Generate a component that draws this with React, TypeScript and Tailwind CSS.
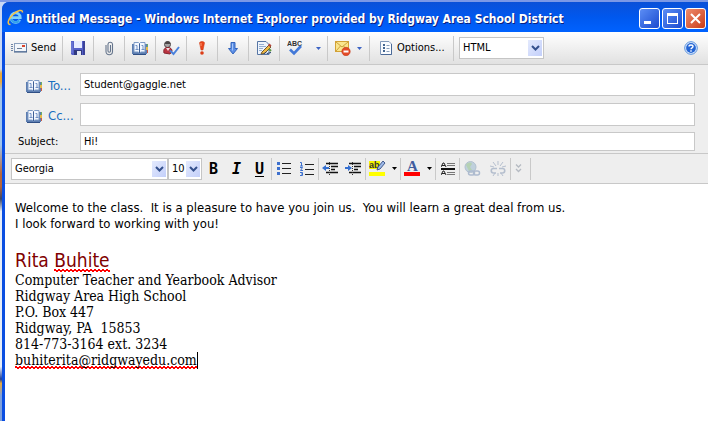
import { ReactNode } from 'react'

interface ToolButtonProps {
  label: string
  className?: string
  children: ReactNode
}

const formatButton = 'flex h-6 w-[23px] shrink-0 items-center justify-center'
const formatLetter = "font-['DejaVu_Sans_Mono',monospace] text-[15px] leading-4 font-bold text-black"

function Divider({ className = 'h-[25px]' }: { className?: string }) {
  return <span className={`w-px shrink-0 bg-[#c9c9c9] ${className}`} />
}

function ToolButton({ label, className = 'w-[30px]', children }: ToolButtonProps) {
  return (
    <button aria-label={label} className={`flex h-6 shrink-0 items-center justify-center ${className}`}>
      {children}
    </button>
  )
}

function Caret({ className = 'text-[#3c63c4]' }: { className?: string }) {
  return (
    <svg width="5" height="3" viewBox="0 0 5 3" className={`shrink-0 ${className}`}>
      <path d="M0 0h5L2.500 3z" fill="currentColor" />
    </svg>
  )
}

interface DropdownProps {
  label: string
  value: string
  className: string
}

function Dropdown({ label, value, className }: DropdownProps) {
  return (
    <span className={`relative flex h-[22px] shrink-0 border border-[#c5c5c5] bg-white ${className}`}>
      <select
        aria-label={label}
        className="w-full appearance-none bg-transparent pl-[3px] text-[11px] leading-5 text-black outline-none"
      >
        <option>{value}</option>
      </select>
      <span className="pointer-events-none absolute top-[2px] right-px flex h-4 w-[14px] items-center justify-center bg-linear-to-br from-[#e4eafd] to-[#c3cffa]">
        <svg width="9" height="6" viewBox="0 0 9 6" fill="none">
          <path d="M1 1l3.500 3.500L8 1" stroke="#34508c" strokeWidth="2" />
        </svg>
      </span>
    </span>
  )
}

function ExplorerIcon() {
  return (
    <svg width="17" height="17" viewBox="0 0 17 17" fill="none" className="shrink-0">
      <path d="M12.800 10.800A4.800 4.800 0 1 1 13.300 8.600H5" stroke="#7fd0fa" strokeWidth="2.600" />
      <path d="M12.300 11.500A4.800 4.800 0 0 1 4 10" stroke="#35a3ec" strokeWidth="2" />
      <path d="M3.500 15.500C-.5 15.500 1 10 6 5.500S15.500 0 15.500 3.500" stroke="#f7c243" strokeWidth="1.500" />
    </svg>
  )
}

function SendIcon() {
  return (
    <svg width="16" height="10" viewBox="0 0 16 10" className="shrink-0">
      <path d="M0 1.500h2M0 3.500h2M0 5.500h2M0 7.500h2" stroke="#6f86a8" />
      <rect x="3.500" y=".5" width="12" height="8" fill="#f3f6fa" stroke="#8ba0bd" />
      <path d="M3 9h13V1" stroke="#3d5a85" fill="none" />
      <rect x="11" y="2" width="3" height="2" fill="#d8452c" />
      <path d="M6 5.500h5" stroke="#6d7f98" />
    </svg>
  )
}

function SaveIcon() {
  return (
    <svg width="14" height="14" viewBox="0 0 14 14">
      <path d="M0 0h14v14H1L0 13z" fill="#5560c8" />
      <path d="M12 0h2v14h-2z" fill="#3b4299" />
      <rect x="3" y="0" width="8" height="7" fill="#e6ebff" />
      <rect x="3" y="9" width="8" height="5" fill="#303a80" />
      <rect x="6" y="10" width="4" height="4" fill="#e4e9f5" />
      <path d="M1 1v11" stroke="#7984dc" />
    </svg>
  )
}

function ClipIcon() {
  return (
    <svg width="9" height="15" viewBox="0 0 9 15" fill="none">
      <path
        d="M1 4v6.500a3.200 3.200 0 0 0 6.500 0V3A2.300 2.300 0 0 0 3 3v7a1.200 1.200 0 0 0 2.500 0V4"
        stroke="#65758c"
        strokeWidth="1.100"
      />
    </svg>
  )
}

function BookIcon() {
  return (
    <svg width="16" height="13" viewBox="0 0 16 13" className="shrink-0">
      <path d="M0 2h15v10H0z" fill="#5c7db0" />
      <path d="M2 .5h4.500l1 1 1-1H13V10H9l-1.500 1L6 10H2z" fill="#f2f7ff" stroke="#7f9cc6" />
      <path d="M7.500 1.500V11" stroke="#3d5f96" />
      <path d="M3.500 3.500H5v4M3.500 7.500h3M9.500 3.500H11v4M9.500 7.500h3" stroke="#7191c4" fill="none" />
      <path d="M1 12.500h13" stroke="#2f4f85" />
      <path d="M15 2h1v3h-1z" fill="#6bae5f" />
      <path d="M14 5h2v3h-2z" fill="#e8b94a" />
      <path d="M15 8h1v3h-1z" fill="#c95a47" />
    </svg>
  )
}

function CheckNamesIcon() {
  return (
    <svg width="17" height="15" viewBox="0 0 17 15" fill="none">
      <circle cx="4.500" cy="3.500" r="3" fill="#a7a4a4" stroke="#504b4d" />
      <path d="M2 3C2 0 7-1 7.500 3z" fill="#4b4546" />
      <path d="M1 12c-1-4 1-5.500 4-5.500s4 2 4 3.500l-2 3z" fill="#bb3440" stroke="#842630" />
      <path d="M3 7l2 3 2-3" fill="#f3dedf" />
      <path d="M7 9.500l3.500 3.500L16 6" stroke="#4b82dc" strokeWidth="2" />
    </svg>
  )
}

function ImportanceHighIcon() {
  return (
    <svg width="6" height="14" viewBox="0 0 6 14">
      <path d="M.5 2C.5 0 5.500 0 5.500 2L4 9H2z" fill="#e8451c" stroke="#c93814" strokeWidth=".5" />
      <circle cx="3" cy="12" r="1.800" fill="#dc3d17" />
      <path d="M2 2v3" stroke="#fb9c73" />
    </svg>
  )
}

function ImportanceLowIcon() {
  return (
    <svg width="10" height="13" viewBox="0 0 10 13">
      <path d="M3 .5h4v6h2.500L5 12 .5 6.500H3z" fill="#5b8ee6" stroke="#3566bd" />
      <path d="M4.500 1.500v7" stroke="#a6c7fa" />
    </svg>
  )
}

function SignatureIcon() {
  return (
    <svg width="15" height="14" viewBox="0 0 15 14">
      <path d="M.5.5H9l3 3v10H.5z" fill="#eef4fc" stroke="#5676a5" />
      <path d="M2 3.500h5M2 5.500h7M2 7.500h4M2 9.500h3" stroke="#94aed1" />
      <path d="M5 11l7-7 2 2-6.500 6.500L4 13z" fill="#edb944" stroke="#70572b" />
      <path d="M11 4l1.500-1.500 2 2L13 6z" fill="#b5443b" />
      <path d="M7 12.500l2-1 1 1 4-1" stroke="#243e6d" fill="none" />
      <path d="M12 8l2 2" stroke="#5d9848" strokeWidth="2" />
    </svg>
  )
}

function BlockMailIcon() {
  return (
    <svg width="16" height="15" viewBox="0 0 16 15" fill="none">
      <rect x=".5" y=".5" width="13" height="10" fill="#fae58d" stroke="#d3a236" />
      <path d="M1 1l6 5 6-5M1 10l4.500-5M13 10L8.500 5" stroke="#cca13d" />
      <circle cx="11" cy="10.500" r="4.200" fill="#e34b27" stroke="#c43a1b" strokeWidth=".6" />
      <path d="M8.500 10.500h5" stroke="#fff" strokeWidth="2" />
    </svg>
  )
}

function OptionsIcon() {
  return (
    <svg width="12" height="14" viewBox="0 0 12 14" className="shrink-0">
      <path d="M.5.5H9l2.500 2.500v10.500H.5z" fill="#fafcff" stroke="#8299ba" />
      <path d="M1 13.500h10.500V3" stroke="#4b6a98" fill="none" />
      <path d="M3 3h2v2H3zM3 6h2v2H3zM3 9h2v2H3z" fill="#43658f" />
      <path d="M6.500 4.500h3M6.500 7.500h3M6.500 10.500h3" stroke="#8aa0bd" />
    </svg>
  )
}

function MessageToolbar() {
  return (
    <div className="flex h-[33px] items-center border-b border-[#c8c8c8] bg-linear-to-b from-white to-[#e1e1e1]">
      <button className="flex w-[57px] shrink-0 items-center gap-1 pl-[6px] text-[11px] leading-4">
        <SendIcon />
        Send
      </button>
      <Divider />
      <ToolButton label="Save"><SaveIcon /></ToolButton>
      <Divider />
      <ToolButton label="Attach file"><ClipIcon /></ToolButton>
      <Divider />
      <ToolButton label="Address book"><BookIcon /></ToolButton>
      <Divider />
      <ToolButton label="Check names"><CheckNamesIcon /></ToolButton>
      <Divider />
      <ToolButton label="High importance"><ImportanceHighIcon /></ToolButton>
      <Divider />
      <ToolButton label="Low importance"><ImportanceLowIcon /></ToolButton>
      <Divider />
      <ToolButton label="Insert signature"><SignatureIcon /></ToolButton>
      <Divider />
      <ToolButton label="Spelling" className="w-[47px] gap-3">
        <svg width="17" height="16" viewBox="0 0 17 16" fill="none">
          <text x="0" y="6" fontSize="7" fontWeight="bold" fill="#333" fontFamily="Liberation Sans, sans-serif">
            ABC
          </text>
          <path d="M3 9.500l4 4L14 6" stroke="#4379d8" strokeWidth="2.600" />
        </svg>
        <Caret />
      </ToolButton>
      <Divider />
      <ToolButton label="Block sender" className="w-[41px] gap-[6px]">
        <BlockMailIcon />
        <Caret />
      </ToolButton>
      <Divider />
      <button className="flex w-[83px] shrink-0 items-center gap-[5px] pl-[10px] text-[11px] leading-4">
        <OptionsIcon />
        Options...
      </button>
      <Divider />
      <Dropdown label="Message format" value="HTML" className="ml-[5px] w-[85px]" />
      <button aria-label="Help" className="mr-[10px] ml-auto shrink-0">
        <svg width="14" height="14" viewBox="0 0 14 14">
          <circle cx="7" cy="7" r="6.300" fill="#e4effe" stroke="#5790dc" />
          <circle cx="7" cy="7" r="4.900" fill="#2465d4" />
          <path d="M5 5.500C5 3.400 9 3.400 9 5.500 9 7 7 6.800 7 8.300" stroke="#fff" strokeWidth="1.400" fill="none" />
          <path d="M6.300 9.300h1.400v1.400H6.300z" fill="#fff" />
        </svg>
      </button>
    </div>
  )
}

function Recipient({ label, id, value }: { label: string; id: string; value: string }) {
  return (
    <div className="flex items-center">
      <button className="flex w-[75px] shrink-0 items-center gap-[6px] pt-[3px] pl-[21px] text-[13px] leading-4 text-[#1a6fbf]">
        <BookIcon />
        <span id={`${id}-label`}>{label}</span>
      </button>
      <input
        id={id}
        aria-labelledby={`${id}-label`}
        defaultValue={value}
        className="h-[23px] min-w-0 flex-1 border border-[#c8c8c8] bg-white px-[3px] text-[11px] outline-none"
      />
    </div>
  )
}

function MessageHeader() {
  return (
    <div className="flex flex-col pt-2 pr-[13px] pb-[2px]">
      <Recipient id="to" label="To..." value="Student@gaggle.net" />
      <div className="mt-[7px]">
        <Recipient id="cc" label="Cc..." value="" />
      </div>
      <div className="mt-[6px] flex items-center">
        <label htmlFor="subject" className="w-[75px] shrink-0 pt-[2px] pl-[13px] text-[11px]">
          Subject:
        </label>
        <input
          id="subject"
          defaultValue="Hi!"
          className="h-[19px] min-w-0 flex-1 border border-[#c8c8c8] bg-white px-[3px] text-[11px] outline-none"
        />
      </div>
    </div>
  )
}

function IndentIcon({ outdent = false }: { outdent?: boolean }) {
  return (
    <svg width="17" height="14" viewBox="0 0 17 14" fill="none">
      <path d="M4 1.500h12M9 4.500h7M9 7.500h4M4 10.500h12" stroke="#111" strokeWidth="1.500" />
      <path d="M7.500 0v14" stroke="#333" strokeDasharray="1 1" />
      <path d={outdent ? 'M4 3L0 6l4 3V7h3V5H4z' : 'M3 3l4 3-4 3V7H0V5h3z'} fill="#356fd0" />
    </svg>
  )
}

function FormatToolbar() {
  return (
    <div className="flex h-[31px] items-center border-y border-[#c8c8c8] bg-[#eee] pl-[6px]">
      <Dropdown label="Font" value="Georgia" className="w-[157px]" />
      <Dropdown label="Font size" value="10" className="w-[34px]" />
      <button className={`${formatButton} ${formatLetter}`}>B</button>
      <button className={`${formatButton} ${formatLetter} italic`}>I</button>
      <button className={`${formatButton} ${formatLetter} underline underline-offset-2`}>U</button>
      <Divider className="h-[22px]" />
      <button aria-label="Bulleted list" className={formatButton}>
        <svg width="14" height="13" viewBox="0 0 14 13">
          <path d="M0 0h3v3H0zM0 5h3v3H0zM0 10h3v3H0z" fill="#3d70ce" />
          <path d="M5 1.500h9M5 6.500h9M5 11.500h9" stroke="#222" />
        </svg>
      </button>
      <button aria-label="Numbered list" className={formatButton}>
        <svg width="14" height="14" viewBox="0 0 14 14" fill="none">
          <path d="M0 .5h1.500V4M0 4h3M0 5.500h2.500L.5 8.500H3M0 10.500h2.500v3H0M1 12h1.500" stroke="#3d70ce" />
          <path d="M5 2.500h9M5 7.500h9M5 12.500h9" stroke="#222" />
        </svg>
      </button>
      <Divider className="h-[22px]" />
      <button aria-label="Decrease indent" className={formatButton}><IndentIcon outdent /></button>
      <button aria-label="Increase indent" className={formatButton}><IndentIcon /></button>
      <Divider className="h-[22px]" />
      <button aria-label="Highlight colour" className="flex w-[34px] shrink-0 items-center justify-center gap-[6px]">
        <svg width="17" height="17" viewBox="0 0 17 17">
          <path d="M0 1h11v8H0z" fill="#f5f500" />
          <text x="0" y="8" fontSize="9" fontWeight="bold" fill="#333" fontFamily="Liberation Sans, sans-serif">
            ab
          </text>
          <path d="M14 1l2 2-5 6-3 1 1-3z" fill="#9db9e8" stroke="#425a8c" />
          <path d="M0 12h16v4H0z" fill="#ff0" />
        </svg>
        <Caret className="text-black" />
      </button>
      <Divider className="h-[22px]" />
      <button aria-label="Font colour" className="flex w-[34px] shrink-0 items-center justify-center gap-[6px]">
        <svg width="17" height="17" viewBox="0 0 17 17" className="overflow-visible">
          <text x="3" y="11" fontSize="15" fontWeight="bold" fill="#405d9f" fontFamily="Liberation Serif, serif">
            A
          </text>
          <path d="M0 12h16v4H0z" fill="#f00" />
        </svg>
        <Caret className="text-black" />
      </button>
      <Divider className="h-[22px]" />
      <button aria-label="Horizontal line" className={formatButton}>
        <svg width="14" height="14" viewBox="0 0 14 14" fill="none">
          <path d="M0 5l2-4h1l2 4M1 3.500h3M0 13l2-4h1l2 4M1 11.500h3" stroke="#222" />
          <path d="M6 1.500h8M6 3.500h8M6 10.500h8M6 12.500h8" stroke="#777" />
          <path d="M0 7h14" stroke="#111" strokeWidth="2" />
        </svg>
      </button>
      <Divider className="h-[22px]" />
      <button aria-label="Insert link" disabled className="flex w-[25px] shrink-0 justify-center">
        <svg width="17" height="16" viewBox="0 0 17 16" fill="none">
          <circle cx="6.500" cy="6" r="5.500" fill="#bfd0dc" stroke="#b3c1cf" />
          <path d="M2 4c2-3 5-3 6-1L6 6l2 3-3 1z" fill="#b5d1b4" />
          <rect x="4.500" y="10" width="6" height="4" rx="2" stroke="#aebbcf" strokeWidth="1.500" />
          <rect x="9.500" y="10" width="6" height="4" rx="2" stroke="#aebbcf" strokeWidth="1.500" />
        </svg>
      </button>
      <button aria-label="Remove link" disabled className="flex w-[25px] shrink-0 justify-center">
        <svg width="16" height="16" viewBox="0 0 16 16" fill="none" stroke="#b5bfce">
          <path d="M7 7.500H3.500a2 2 0 0 0 0 4.500H6M9 7.500h3.500a2 2 0 0 1 0 4.500H10" strokeWidth="1.600" />
          <path d="M8 0v4M3 1l3 4M13 1l-3 4M8 12v3M5 12l-2 3M11 12l2 3M0 5l4 1M16 5l-4 1" />
        </svg>
      </button>
      <Divider className="h-[22px]" />
      <button aria-label="More" disabled className="flex w-[19px] shrink-0 justify-center pr-1">
        <svg width="7" height="9" viewBox="0 0 7 9" fill="none" stroke="#b5bac2">
          <path d="M1 .5l2.500 2.500L6 .5M1 5l2.500 2.500L6 5" strokeWidth="1.300" />
        </svg>
      </button>
      <Divider className="h-[22px]" />
    </div>
  )
}

// red zigzag under words the spell checker does not know
const misspelled =
  'pb-px bg-[linear-gradient(45deg,transparent_35%,#f00_35%_65%,transparent_65%),linear-gradient(135deg,transparent_35%,#f00_35%_65%,transparent_65%)] bg-[length:4px_3px,4px_3px] bg-[position:0_100%,2px_100%] bg-repeat-x'

function MessageBody() {
  return (
    <div className="flex-1 bg-white px-[10px] pt-4 text-[13px] leading-4 text-black">
      <p className="whitespace-pre-wrap">Welcome to the class.  It is a pleasure to have you join us.  You will learn a great deal from us.</p>
      <p>I look forward to working with you!</p>
      <p className="mt-4 text-[19px] leading-6 text-[#800000]">
        Rita <span className={misspelled}>Buhite</span>
      </p>
      <address className="font-['DejaVu_Serif_Condensed','DejaVu_Serif',serif] text-[14px] leading-4 whitespace-pre-wrap not-italic">
        <p>Computer Teacher and Yearbook Advisor</p>
        <p>Ridgway Area High School</p>
        <p>P.O. Box 447</p>
        <p>Ridgway, PA  15853</p>
        <p>814-773-3164 ext. 3234</p>
        <p>
          <span className={`border-r border-black ${misspelled}`}>buhiterita@ridgwayedu.com</span>
        </p>
      </address>
    </div>
  )
}

const captionButton = 'flex h-[21px] w-[21px] items-center justify-center rounded-[3px] border border-white'

function TitleBar() {
  return (
    <header className="flex h-[30px] shrink-0 items-center rounded-tl-[7px] bg-linear-to-b from-[#0a50d8] via-[#0058ee] to-[#0062ff] pr-[2px] pl-[5px]">
      <ExplorerIcon />
      <h1 className="ml-[2px] truncate pt-1 text-[12px] font-bold text-white [text-shadow:1px_1px_0_#0a1f80]">
        Untitled Message - Windows Internet Explorer provided by Ridgway Area School District
      </h1>
      <div className="ml-auto flex shrink-0 gap-[2px] pt-[3px]">
        <button aria-label="Minimize" className={`${captionButton} bg-linear-to-br from-[#5c8df5] to-[#1c49cf]`}>
          <span className="mt-2 mr-1 h-[3px] w-[7px] bg-white" />
        </button>
        <button aria-label="Maximize" className={`${captionButton} bg-linear-to-br from-[#5c8df5] to-[#1c49cf]`}>
          <span className="h-[11px] w-[11px] border border-t-[3px] border-white" />
        </button>
        <button aria-label="Close" className={`${captionButton} bg-linear-to-br from-[#ee8b6c] to-[#c93a14]`}>
          <svg width="11" height="11" viewBox="0 0 11 11">
            <path d="M1 1l9 9M10 1l-9 9" stroke="#fff" strokeWidth="2" />
          </svg>
        </button>
      </div>
    </header>
  )
}

export default function App() {
  return (
    <div className="flex min-h-screen border-t-2 border-[#7b98e6] bg-[linear-gradient(#c9d8f5_0_16%,#e9a93c_17%_19%,#9fc4ee_21%_34%,#b5653a_41%_44%,#3a4668_47%,#e6edf8_50%_87%,#1f3f9a_90%,#e9a93c_91%,#7ea0dc_94%)] pl-[2px] font-['DejaVu_Sans_Condensed','DejaVu_Sans',sans-serif]">
      <div className="flex min-w-0 flex-1 flex-col rounded-tl-[7px] bg-[#0a4ee2]">
        <TitleBar />
        <main className="ml-[3px] flex flex-1 flex-col bg-[#eee]">
          <MessageToolbar />
          <MessageHeader />
          <FormatToolbar />
          <MessageBody />
        </main>
      </div>
    </div>
  )
}
